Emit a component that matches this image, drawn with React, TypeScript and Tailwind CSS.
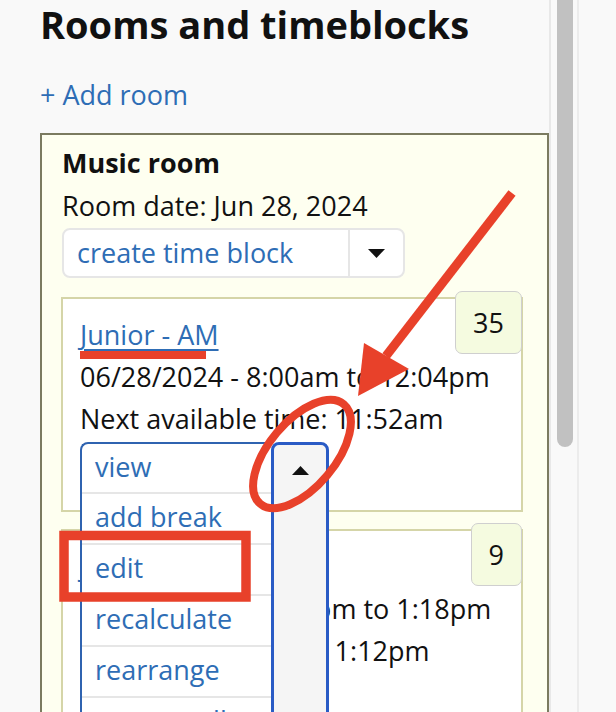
import React from "react";

function Badge({ n }: { n: string }) {
  return (
    <div className="absolute top-[-8px] right-[-1px] rounded-[7px] border-[1.5px] border-[#cfcfcf] bg-[#f5fbe0] px-[17px] py-[9px] text-[27px] leading-[43px] text-[#111]">
      {n}
    </div>
  );
}

function Caret({ up }: { up?: boolean }) {
  return (
    <svg width="17" height="9" viewBox="0 0 17 9">
      {up ? <polygon points="0,9 17,9 8.5,0" fill="#111" /> : <polygon points="0,0 17,0 8.5,9" fill="#111" />}
    </svg>
  );
}

export default function App() {
  const items = ["add break", "edit", "recalculate", "rearrange", "remove all"];
  return (
    <div className="relative flex h-[712px] w-[616px] overflow-hidden bg-[#f9f9f9] font-['Open_Sans',sans-serif] text-[#111]">
      <div className="w-[549px] shrink-0 pl-[40px]">
        <h1 className="whitespace-nowrap pt-[2px] text-[38px] font-bold leading-[44px]">Rooms and timeblocks</h1>
        <div className="mt-[31px] text-[27px] leading-[36px] text-[#2e6db5]">+ Add room</div>
        <div className="mt-[20px] h-[700px] border-2 border-[#7b7b60] bg-[#fefff0] pl-[20px] text-[27px]">
          <div className="pt-[6px] font-bold leading-[43px]">Music room</div>
          <div className="leading-[43px]">Room date: Jun 28, 2024</div>
          <div className="mt-[1px] flex h-[50px] w-[343px] rounded-[8px] border-2 border-[#e6e6e6] bg-white">
            <div className="flex w-[286px] items-center whitespace-nowrap border-r-2 border-[#e6e6e6] pl-[13px] leading-[46px] text-[#2e6db5]">
              create time block
            </div>
            <div className="flex flex-1 items-center justify-center">
              <Caret />
            </div>
          </div>

          <div className="relative -ml-[1px] mr-[24px] mt-[19px] border-2 border-[#d5d5a8] bg-white pb-[18px] pl-[17px] pt-[15px] leading-[42px]">
            <Badge n="35" />
            <div className="text-[#2e6db5] underline decoration-[1.5px] underline-offset-[4px]">Junior - AM</div>
            <div className="whitespace-nowrap">06/28/2024 - 8:00am to 12:04pm</div>
            <div className="whitespace-nowrap">Next available time: 11:52am</div>
            <div className="relative mt-[2px] h-[50px]">
              <div className="absolute left-0 top-0 z-10 flex items-start">
                <div className="w-[191px] rounded-tl-[8px] border-l-2 border-t-2 border-[#2f63b0] bg-white text-[#2e6db5]">
                  <div className="h-[48px] pl-[13px] leading-[45px]">view</div>
                  {items.map((it) => (
                    <div key={it} className="h-[51px] whitespace-nowrap border-t-2 border-[#e6e6e6] pl-[13px] leading-[45px]">
                      {it}
                    </div>
                  ))}
                </div>
                <div className="flex h-[320px] w-[58px] justify-center rounded-t-[8px] border-[3px] border-[#2a5bc5] bg-[#f5f5f5] pt-[21px]">
                  <Caret up />
                </div>
              </div>
            </div>
          </div>

          <div className="relative -ml-[1px] mr-[24px] mt-[17px] border-2 border-[#d5d5a8] bg-white pb-[18px] pl-[17px] pt-[15px] leading-[42px]">
            <Badge n="9" />
            <div className="text-[#2e6db5] underline decoration-[1.5px] underline-offset-[4px]">Junior - PM</div>
            <div className="whitespace-nowrap">06/28/2024 - 12:04pm to 1:18pm</div>
            <div className="whitespace-nowrap">Next available time: 1:12pm</div>
            <div className="h-[50px]" />
          </div>
        </div>
      </div>
      <div className="w-[2px] shrink-0 bg-[#e8e8e8]" />
      <div className="w-[26px] shrink-0 px-[6px]">
        <div className="h-[447px] w-[16px] rounded-b-full bg-[#c1c1c1]" />
      </div>
      <div className="w-[2px] shrink-0 bg-[#ececec]" />
      <div className="flex-1" />

      <svg className="pointer-events-none absolute left-0 top-0 z-20" width="616" height="712" viewBox="0 0 616 712">
        <rect x="80" y="351" width="126" height="8" fill="#e8412a" />
        <line x1="512" y1="193" x2="386" y2="356" stroke="#e8412a" strokeWidth="9" />
        <polygon points="364,343 409,369 358,396" fill="#e8412a" />
        <ellipse cx="302" cy="454" rx="33" ry="65" transform="rotate(40 302 454)" fill="none" stroke="#e8412a" strokeWidth="8" />
        <rect x="64" y="535.5" width="182" height="61.5" fill="none" stroke="#e8412a" strokeWidth="9.5" />
      </svg>
    </div>
  );
}
